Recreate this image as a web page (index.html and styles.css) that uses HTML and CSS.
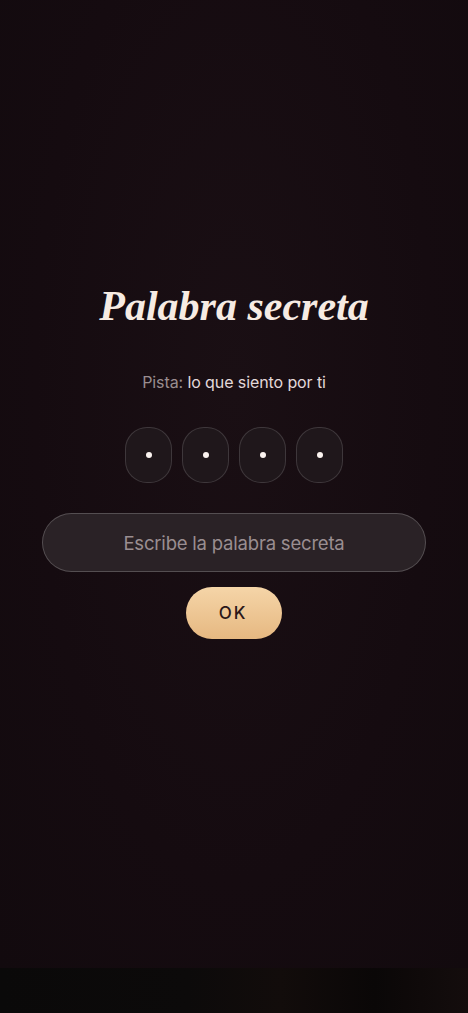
FILE: index.html
```html
<!DOCTYPE html>
<html lang="es">
<head>
    <meta charset="UTF-8">
    <meta name="viewport" content="width=device-width, initial-scale=1.0">
    <title>Palabra secreta</title>
    <link rel="stylesheet" href="styles.css">
</head>
<body>
    <div class="screen">
        <div class="content">
            <h1 class="title">Palabra secreta</h1>
            <p class="hint"><span class="hint-label">Pista:</span> lo que siento por ti</p>

            <div class="pin-row">
                <div class="pin-box"><span class="pin-dot"></span></div>
                <div class="pin-box"><span class="pin-dot"></span></div>
                <div class="pin-box"><span class="pin-dot"></span></div>
                <div class="pin-box"><span class="pin-dot"></span></div>
            </div>

            <input class="secret-input" type="text" placeholder="Escribe la palabra secreta">
            <button class="ok-btn">OK</button>
        </div>
    </div>
    <div class="bottom-bar"></div>
</body>
</html>
```

FILE: styles.css
```css
html, body {
    margin: 0;
    padding: 0;
    height: 100%;
}

body {
    background-color: #150b10;
    font-family: Inter, "Noto Sans", sans-serif;
    display: flex;
    flex-direction: column;
    min-height: 100vh;
}

.screen {
    flex: 1;
    display: flex;
    flex-direction: column;
    background: radial-gradient(ellipse at 50% 40%, #1a0f14 0%, #150b10 60%, #120a0e 100%);
}

.content {
    padding-top: 281px;
    display: flex;
    flex-direction: column;
    align-items: center;
}

.title {
    margin: 0;
    font-family: "Liberation Serif", "DejaVu Serif", serif;
    font-style: italic;
    font-weight: bold;
    font-size: 42px;
    line-height: 50px;
    color: #f6ebe3;
}

.hint {
    margin: 40px 0 0;
    font-size: 16px;
    line-height: 22px;
    color: #e3d9da;
    letter-spacing: -0.1px;
}

.hint-label {
    color: #9a8d90;
}

.pin-row {
    display: flex;
    gap: 10px;
    margin-top: 34px;
}

.pin-box {
    width: 47px;
    height: 56px;
    box-sizing: border-box;
    border-radius: 22px;
    border: 1px solid rgba(255, 255, 255, 0.14);
    background-color: #1f171b;
    display: flex;
    align-items: center;
    justify-content: center;
}

.pin-dot {
    width: 6px;
    height: 6px;
    border-radius: 50%;
    background-color: #fbf3f0;
}

.secret-input {
    margin-top: 30px;
    width: 384px;
    height: 59px;
    box-sizing: border-box;
    border-radius: 30px;
    border: 1px solid rgba(255, 255, 255, 0.2);
    background-color: #2a2226;
    color: #efe4e2;
    font-family: Inter, "Noto Sans", sans-serif;
    font-size: 18.5px;
    letter-spacing: -0.2px;
    text-align: center;
    outline: none;
}

.secret-input::placeholder {
    color: #9a8e91;
}

.ok-btn {
    margin-top: 15px;
    width: 96px;
    height: 52px;
    border: none;
    border-radius: 26px;
    background: linear-gradient(180deg, #f5d5a8 0%, #e6b881 100%);
    color: #2a1719;
    font-family: Inter, "Noto Sans", sans-serif;
    font-size: 17px;
    font-weight: 500;
    letter-spacing: 2px;
    padding-left: 4px;
    cursor: pointer;
}

.bottom-bar {
    height: 45px;
    background: linear-gradient(90deg, #0a0909 0%, #0c0a0a 40%, #120c0b 60%, #0a0707 80%, #140d0d 100%);
}
```
